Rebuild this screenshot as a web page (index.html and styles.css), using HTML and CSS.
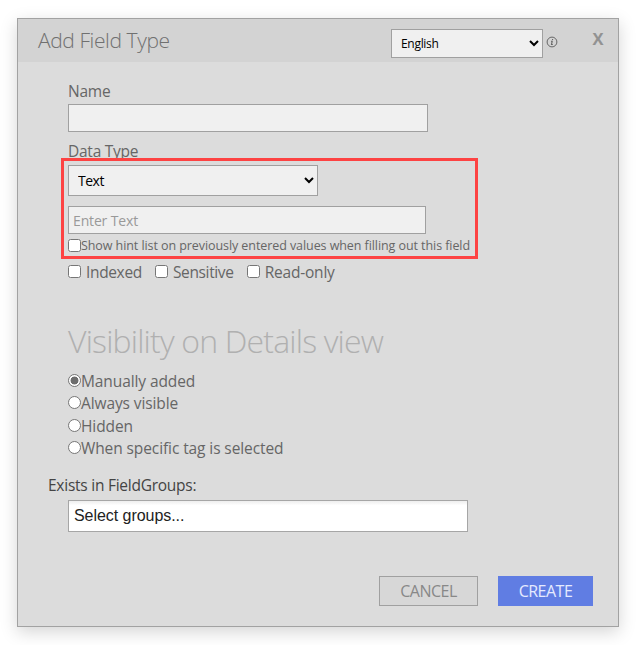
FILE: index.html
```
<!DOCTYPE html>
<html lang="en">
<head>
<meta charset="utf-8">
<title>Add Field Type</title>
<link rel="stylesheet" href="styles.css">
</head>
<body>
<main class="dialog">
  <header class="header">
    <h1 class="title">Add Field Type</h1>
    <select class="language" aria-label="Language"><option>English</option></select>
    <svg class="info" viewBox="0 0 12 12" width="12" height="12" fill="none" stroke="#666">
      <circle cx="6" cy="6" r="4.9"/>
      <path d="M5 5.2h1.2L5.5 8.5h1.3" stroke-width="1.1"/>
      <path d="M6 3.5h1.1" stroke-width="1.2"/>
    </svg>
    <button class="close" type="button">X</button>
  </header>
  <form class="body">
    <label class="label" for="name">Name</label>
    <input class="input name" id="name" type="text">
    <label class="label type-label" for="type">Data Type</label>
    <section class="highlight">
      <select class="type" id="type"><option>Text</option></select>
      <input class="input default-value" type="text" placeholder="Enter Text">
      <label class="hint"><input class="box" type="checkbox"><span>Show hint list on previously entered values when filling out this field</span></label>
    </section>
    <div class="flags">
      <label class="flag"><input class="box" type="checkbox"><span>Indexed</span></label>
      <label class="flag"><input class="box" type="checkbox"><span>Sensitive</span></label>
      <label class="flag"><input class="box" type="checkbox"><span>Read-only</span></label>
    </div>
    <h2 class="subtitle">Visibility on Details view</h2>
    <div class="radios">
      <label class="radio"><input class="dot" type="radio" name="visibility" checked><span>Manually added</span></label>
      <label class="radio"><input class="dot" type="radio" name="visibility"><span>Always visible</span></label>
      <label class="radio"><input class="dot" type="radio" name="visibility"><span>Hidden</span></label>
      <label class="radio"><input class="dot" type="radio" name="visibility"><span>When specific tag is selected</span></label>
    </div>
    <div class="groups-label">Exists in FieldGroups:</div>
    <div class="groups">Select groups...</div>
    <footer class="actions">
      <button class="button cancel" type="button">CANCEL</button>
      <button class="button create" type="button">CREATE</button>
    </footer>
  </form>
</main>
</body>
</html>
```

FILE: styles.css
```
* { box-sizing: border-box; }
body { height: 645px; margin: 0; padding: 18px 0 0 17px; background: #fff; font: 16px/22px "Open Sans", "Noto Sans", sans-serif; color: #666; overflow: hidden; }
input, select, button { font-family: inherit; margin: 0; border-radius: 0; }
.dialog { width: 602px; height: 609px; border: 1px solid #a2a2a2; background: #dcdcdc; box-shadow: 0 5px 16px rgba(0, 0, 0, .17); }
.header { display: flex; height: 43px; padding-left: 20px; background: #d3d3d3; }
.title { width: 353px; margin: 7px 0 0; font-size: 21px; line-height: 28px; font-weight: 300; letter-spacing: -.4px; color: #707070; white-space: nowrap; }
.language { width: 152px; height: 29px; margin-top: 10px; padding: 0 0 0 5px; border: 1px solid #a0a0a0; background: #f0f0f0; font-size: 12px; letter-spacing: -.3px; color: #000; }
.info { margin: 17px 0 0 3px; }
.close { width: 20px; height: 24px; margin: 8px 0 0 30px; padding: 0; border: 0; background: none; font-size: 16.5px; line-height: 24px; font-weight: 700; color: #929292; }
.body { padding-left: 50px; }
.label { display: block; height: 22px; margin-top: 18px; font-size: 15.5px; letter-spacing: -.25px; white-space: nowrap; }
.type-label { margin-top: 8px; }
.input { display: block; height: 28px; padding: 0 4px; border: 1px solid #a0a0a0; background: #f0f0f0; font-size: 14px; color: #000; }
.input::placeholder { color: #999; letter-spacing: -.15px; }
.name { width: 360px; margin-top: 2px; }
.highlight { position: relative; width: 417px; height: 101px; margin: -4px 0 0 -7px; padding: 7px 0 0 7px; }
.highlight::after { content: ""; position: absolute; inset: 0; border: 3px solid #fd4343; pointer-events: none; }
.type { display: block; width: 250px; height: 31px; padding: 0 0 0 5px; border: 1px solid #a0a0a0; background: #f0f0f0; font-size: 14px; letter-spacing: -.5px; color: #000; }
.default-value { width: 358px; margin-top: 10px; }
.hint { display: flex; align-items: center; height: 20px; margin-top: 2px; font-size: 12.5px; line-height: 20px; letter-spacing: -.075px; white-space: nowrap; }
.box, .dot { flex: none; width: 13px; height: 13px; }
.hint .box { margin-top: -1px; }
.flags { display: flex; height: 22px; margin-top: 2px; gap: 13px; white-space: nowrap; }
.flag { display: flex; gap: 5px; font-size: 15.5px; line-height: 22px; letter-spacing: -.35px; }
.flag:last-child { letter-spacing: -.2px; }
.flag .box { margin-top: 4px; }
.subtitle { height: 44px; margin: 36px 0 0; font-size: 32px; line-height: 44px; font-weight: 300; letter-spacing: -.82px; color: #b0b0b0; white-space: nowrap; }
.radios { height: 90px; margin-top: 7px; }
.radio { display: flex; height: 22.4px; font-size: 15.5px; letter-spacing: -.1px; white-space: nowrap; }
.dot { appearance: none; margin-top: 4px; border: 1px solid #767676; border-radius: 50%; background: #fff; }
.dot:checked { background: radial-gradient(circle, #6e6e6e 3.6px, #fff 4.3px); }
.groups-label { height: 22px; margin: 14px 0 0 -20px; font-size: 15.5px; letter-spacing: -.25px; color: #444; }
.groups { width: 400px; height: 32px; margin-top: 4px; padding-left: 5px; border: 1px solid #a6a6a6; background: linear-gradient(#eee, #fff 15%); font: 16px/30px "Liberation Sans", Arial, sans-serif; letter-spacing: -.05px; color: #222; }
.actions { display: flex; justify-content: flex-end; gap: 20px; margin-top: 44px; padding-right: 25px; }
.button { height: 30px; padding: 0; font-size: 16px; letter-spacing: -.5px; }
.cancel { width: 99px; border: 1px solid #a0a0a0; background: #d7d7d7; color: #888; }
.create { width: 95px; border: 0; background: #607de3; color: #e5eaff; }
```
